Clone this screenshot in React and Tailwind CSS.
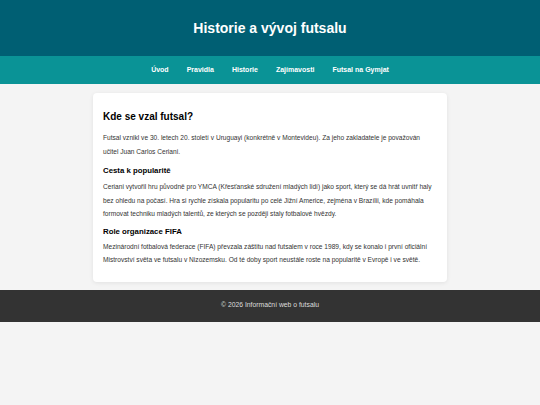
import React from 'react';

const links = ['Úvod', 'Pravidla', 'Historie', 'Zajímavosti', 'Futsal na Gymjat'];

export default function App() {
  return (
    <div className="min-h-[405px] bg-[#f4f4f4] text-[#333]" style={{ fontFamily: '"Liberation Sans", Arial, sans-serif' }}>
      <header className="bg-[#005f73] h-[56px] flex items-center justify-center">
        <h1 className="text-white font-bold text-[14px]">Historie a vývoj futsalu</h1>
      </header>
      <nav className="bg-[#0a9396] h-[28px] flex items-center justify-center gap-[18px]">
        {links.map(l => (
          <a key={l} href="#" className="text-white font-bold text-[7px]">{l}</a>
        ))}
      </nav>
      <main className="max-w-[354px] mx-auto mt-[9px] bg-white rounded-[4px] shadow-[0_1px_4px_rgba(0,0,0,0.08)] px-[10px] pt-[18px] pb-[15px]">
        <h2 className="text-[10px] font-bold text-black leading-[12px]">Kde se vzal futsal?</h2>
        <p className="text-[6.6px] leading-[13.5px] mt-[8px]">
          Futsal vznikl ve 30. letech 20. století v Uruguayi (konkrétně v Montevideu). Za jeho zakladatele je považován učitel Juan Carlos Ceriani.
        </p>
        <h3 className="text-[7.8px] font-bold text-black leading-[10px] mt-[8px]">Cesta k popularitě</h3>
        <p className="text-[6.6px] leading-[13.5px] mt-[4px]">
          Ceriani vytvořil hru původně pro YMCA (Křesťanské sdružení mladých lidí) jako sport, který se dá hrát uvnitř haly bez ohledu na počasí. Hra si rychle získala popularitu po celé Jižní Americe, zejména v Brazílii, kde pomáhala formovat techniku mladých talentů, ze kterých se později staly fotbalové hvězdy.
        </p>
        <h3 className="text-[7.8px] font-bold text-black leading-[10px] mt-[6px]">Role organizace FIFA</h3>
        <p className="text-[6.6px] leading-[13.5px] mt-[3px]">
          Mezinárodní fotbalová federace (FIFA) převzala záštitu nad futsalem v roce 1989, kdy se konalo i první oficiální Mistrovství světa ve futsalu v Nizozemsku. Od té doby sport neustále roste na popularitě v Evropě i ve světě.
        </p>
      </main>
      <footer className="bg-[#333] h-[32px] mt-[8px] flex items-center justify-center">
        <p className="text-[#ddd] text-[6.8px]">© 2026 Informační web o futsalu</p>
      </footer>
    </div>
  );
}
